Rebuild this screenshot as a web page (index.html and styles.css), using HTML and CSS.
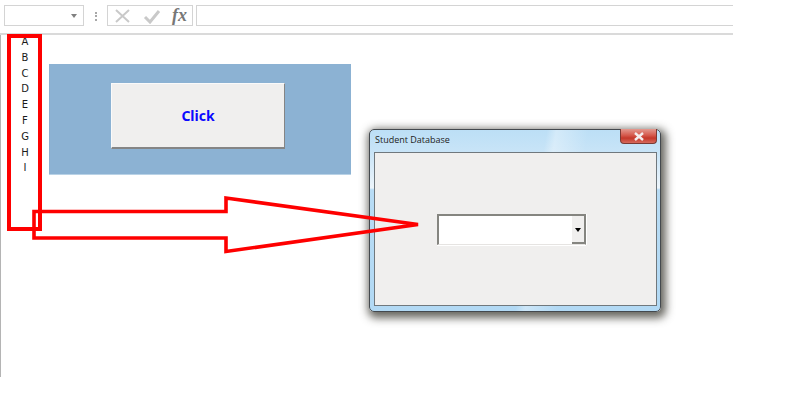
FILE: index.html
```html
<!DOCTYPE html>
<html lang="en">
<head>
<meta charset="utf-8">
<title>Student Database</title>
<link rel="stylesheet" href="styles.css">
</head>
<body>
<div class="page">
  <header class="formula-bar">
    <div class="name-box"><span class="caret"></span></div>
    <div class="grip"></div>
    <div class="fx-group">
      <svg class="fx-icon" width="20" height="16" viewBox="0 0 20 16"><path d="M3 2 L16 14 M16 2 L3 14" fill="none" stroke="#c9c9c9" stroke-width="2"/></svg>
      <svg class="fx-icon" width="20" height="16" viewBox="0 0 20 16"><path d="M3 9 L8 14 L17 3" fill="none" stroke="#c9c9c9" stroke-width="3"/></svg>
      <span class="fx-label">fx</span>
    </div>
    <div class="formula-input"></div>
  </header>
  <main class="sheet">
    <ul class="letters">
      <li>A</li><li>B</li><li>C</li><li>D</li><li>E</li><li>F</li><li>G</li><li>H</li><li>I</li>
    </ul>
    <section class="shape">
      <button class="click-btn" type="button">Click</button>
    </section>
  </main>

  <div class="dialog">
    <div class="dialog-title">
      <span class="dialog-name">Student Database</span>
      <span class="close-btn">
        <svg width="12" height="9" viewBox="0 0 12 9"><path d="M2 1 L10 8 M10 1 L2 8" fill="none" stroke="#f4eeee" stroke-width="2.4"/></svg>
      </span>
    </div>
    <div class="dialog-body">
      <div class="combo">
        <div class="combo-text"></div>
        <div class="combo-btn"><span class="combo-caret"></span></div>
      </div>
    </div>
  </div>

  <div class="red-box"></div>
  <svg class="red-arrow" width="800" height="411" viewBox="0 0 800 411">
    <path d="M34 211.500 H226 V198 L418 224.500 L226 251.500 V238 H34 Z" fill="none" stroke="#fe0000" stroke-width="3.600"/>
  </svg>
</div>
</body>
</html>
```
FILE: styles.css
```css
* { box-sizing: border-box; }
html, body { margin: 0; padding: 0; background: #fff; }
.page {
  position: relative;
  width: 800px;
  height: 411px;
  overflow: hidden;
  background: #fff;
  font-family: "DejaVu Sans", sans-serif;
}
.formula-bar {
  display: flex;
  align-items: flex-start;
  width: 733px;
  height: 35px;
  padding: 5px 0 0 4px;
  border-bottom: 2px solid #dadada;
}
.name-box {
  position: relative;
  width: 80px;
  height: 21px;
  border: 1px solid #d4d4d4;
}
.caret {
  position: absolute;
  right: 6px;
  top: 8px;
  border-left: 3.500px solid transparent;
  border-right: 3.500px solid transparent;
  border-top: 4px solid #808080;
}
.grip {
  width: 2px;
  height: 9px;
  margin: 7px 10px 0 11px;
  border-left: 2px dotted #a8a8a8;
}
.fx-group {
  display: flex;
  align-items: center;
  width: 86px;
  height: 21px;
  padding-left: 5px;
  gap: 9px;
  border: 1px solid #d4d4d4;
}
.fx-icon { flex: none; }
.fx-label {
  margin-left: 1px;
  font: italic bold 18px/19px "Liberation Serif", serif;
  color: #777;
}
.formula-input {
  flex: 1;
  height: 21px;
  margin-left: 3px;
  border: 1px solid #d4d4d4;
  border-right: 0;
}
.sheet {
  display: flex;
  align-items: flex-start;
  width: 733px;
  height: 342px;
  border-left: 1px solid #b4b4b4;
}
.letters {
  flex: none;
  width: 48px;
  margin: -1px 0 0;
  padding: 0;
  list-style: none;
  text-align: center;
  font: 10px/15.800px "DejaVu Sans", sans-serif;
  color: #1a1a1a;
}
.shape {
  width: 302px;
  height: 111px;
  margin: 29px 0 0;
  padding: 19px 0 0 62px;
  background: #8cb2d3;
  border-bottom: 1px solid #b9d2e6;
}
.click-btn {
  display: block;
  width: 174px;
  height: 66px;
  padding: 0;
  background: #f0efee;
  border: 1px solid;
  border-color: #fafafa #858585 #858585 #fafafa;
  border-bottom-width: 2px;
  color: #0a0aff;
  font: bold 14px "Noto Sans", sans-serif;
}
.dialog {
  position: absolute;
  left: 369px;
  top: 129px;
  width: 292px;
  height: 183px;
  display: flex;
  flex-direction: column;
  padding: 0 3px 5px 4px;
  border: 1px solid #44494e;
  border-radius: 5px;
  background:
    linear-gradient(100deg, transparent 55%, rgba(255,255,255,.35) 58%, transparent 68%),
    linear-gradient(180deg, #bcdff6 0%, #c8e4f7 12%, #edf5fb 32%, #b8dcf5 33%, #b2d9f4 100%);
  box-shadow: 2px 3px 9px 3px rgba(40,38,30,.7);
}
.dialog-title {
  display: flex;
  justify-content: space-between;
  align-items: flex-start;
  height: 22px;
  flex: none;
}
.dialog-name {
  margin: 4px 0 0 1px;
  font: 9px/12px "Open Sans", sans-serif;
  color: #222;
}
.close-btn {
  display: flex;
  align-items: center;
  justify-content: center;
  width: 37px;
  height: 15px;
  margin-top: -1px;
  border: 1px solid #7a3a34;
  border-top: 0;
  border-radius: 0 0 4px 4px;
  background: linear-gradient(180deg, #e39a90 0%, #d5594c 45%, #c5382a 65%, #d66a5c 100%);
}
.dialog-body {
  flex: 1;
  display: flex;
  padding: 61px 0 0 62px;
  background: #f0efee;
  border: 1px solid #70787d;
}
.combo {
  display: flex;
  width: 149px;
  height: 31px;
  border: 2px solid #858580;
  border-right-width: 1px;
  border-bottom: 1px solid #e6e4e2;
  box-shadow: 1px 0 0 #fff, 0 1px 0 #fff;
}
.combo-text { flex: 1; background: #fff; }
.combo-btn {
  position: relative;
  width: 13px;
  background: #f0efee;
  border-bottom: 2px solid #858580;
  border-right: 1px solid #858580;
}
.combo-caret {
  position: absolute;
  left: 3px;
  top: 12px;
  border-left: 3.500px solid transparent;
  border-right: 3.500px solid transparent;
  border-top: 4px solid #000;
}
.red-box {
  position: absolute;
  left: 7px;
  top: 34px;
  width: 35px;
  height: 197px;
  border: 4px solid #fe0000;
}
.red-arrow {
  position: absolute;
  left: 0;
  top: 0;
  pointer-events: none;
}
```
